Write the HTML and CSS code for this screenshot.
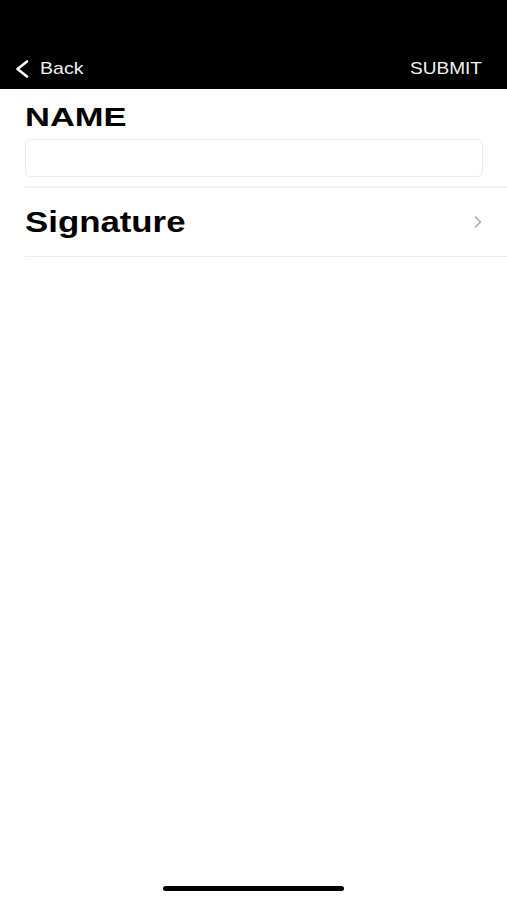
FILE: index.html
```html
<!DOCTYPE html>
<html lang="en">
<head>
    <meta charset="UTF-8">
    <meta name="viewport" content="width=device-width, initial-scale=1.0">
    <title>Signature Form</title>
    <link rel="stylesheet" href="styles.css">
</head>
<body>
    <div class="screen">
        <header class="top-bar">
            <button class="back-btn">
                <svg class="back-icon" width="14" height="18" viewBox="0 0 14 18">
                    <path d="M12 1.5 L2.5 9 L12 16.5" fill="none" stroke="#fff" stroke-width="2.6" stroke-linecap="round" stroke-linejoin="round"/>
                </svg>
                <span class="wide">Back</span>
            </button>
            <button class="submit-btn"><span class="wide-sm">SUBMIT</span></button>
        </header>

        <main class="form">
            <div class="field">
                <label class="field-label"><span class="wide-lg">NAME</span></label>
                <input class="field-input" type="text">
            </div>

            <div class="row-list">
                <div class="row">
                    <span class="row-title"><span class="wide-md">Signature</span></span>
                    <svg class="chevron" width="10" height="14" viewBox="0 0 10 14">
                        <path d="M2.5 2 L7.5 7 L2.5 12" fill="none" stroke="#a8a8a8" stroke-width="1.6" stroke-linecap="round" stroke-linejoin="round"/>
                    </svg>
                </div>
            </div>
        </main>

        <div class="home-bar"></div>
    </div>
</body>
</html>
```

FILE: styles.css
```css
* {
    margin: 0;
    padding: 0;
    box-sizing: border-box;
}

body {
    font-family: "Liberation Sans", Arial, sans-serif;
    background: #fff;
    color: #000;
}

.screen {
    width: 507px;
    height: 900px;
    display: flex;
    flex-direction: column;
}

.wide, .wide-sm, .wide-md, .wide-lg {
    display: inline-block;
    transform-origin: left center;
}

.wide { transform: scaleX(1.15); }
.wide-sm { transform: scaleX(1.12); }
.wide-md { transform: scaleX(1.2); }
.wide-lg { transform: scaleX(1.38); }

.top-bar {
    height: 89px;
    background: #000;
    display: flex;
    align-items: flex-end;
    justify-content: space-between;
    padding: 0 25px 10px 15px;
}

.back-btn, .submit-btn {
    background: none;
    border: none;
    color: #f2f2f2;
    font-family: inherit;
    display: flex;
    align-items: center;
}

.back-btn {
    font-size: 17px;
    gap: 11px;
}

.back-icon {
    display: block;
}

.submit-btn {
    font-size: 17px;
    width: 72px;
    justify-content: flex-start;
}

.form {
    padding-left: 25px;
}

.field {
    padding: 14px 24px 9px 0;
    display: flex;
    flex-direction: column;
    gap: 8px;
}

.field-label {
    font-size: 25px;
    font-weight: bold;
    line-height: 28px;
}

.field-input {
    height: 38px;
    border: 1px solid #ebebeb;
    border-radius: 6px;
    background: #fff;
    outline: none;
}

.row-list {
    border-top: 2px solid #f3f3f3;
}

.row {
    height: 69px;
    display: flex;
    align-items: center;
    justify-content: space-between;
    padding-right: 24px;
    border-bottom: 1px solid #ececec;
}

.row-title {
    font-size: 29px;
    font-weight: bold;
}

.chevron {
    display: block;
}

.home-bar {
    margin: auto auto 9px;
    width: 181px;
    height: 5px;
    border-radius: 3px;
    background: #000;
}
```
